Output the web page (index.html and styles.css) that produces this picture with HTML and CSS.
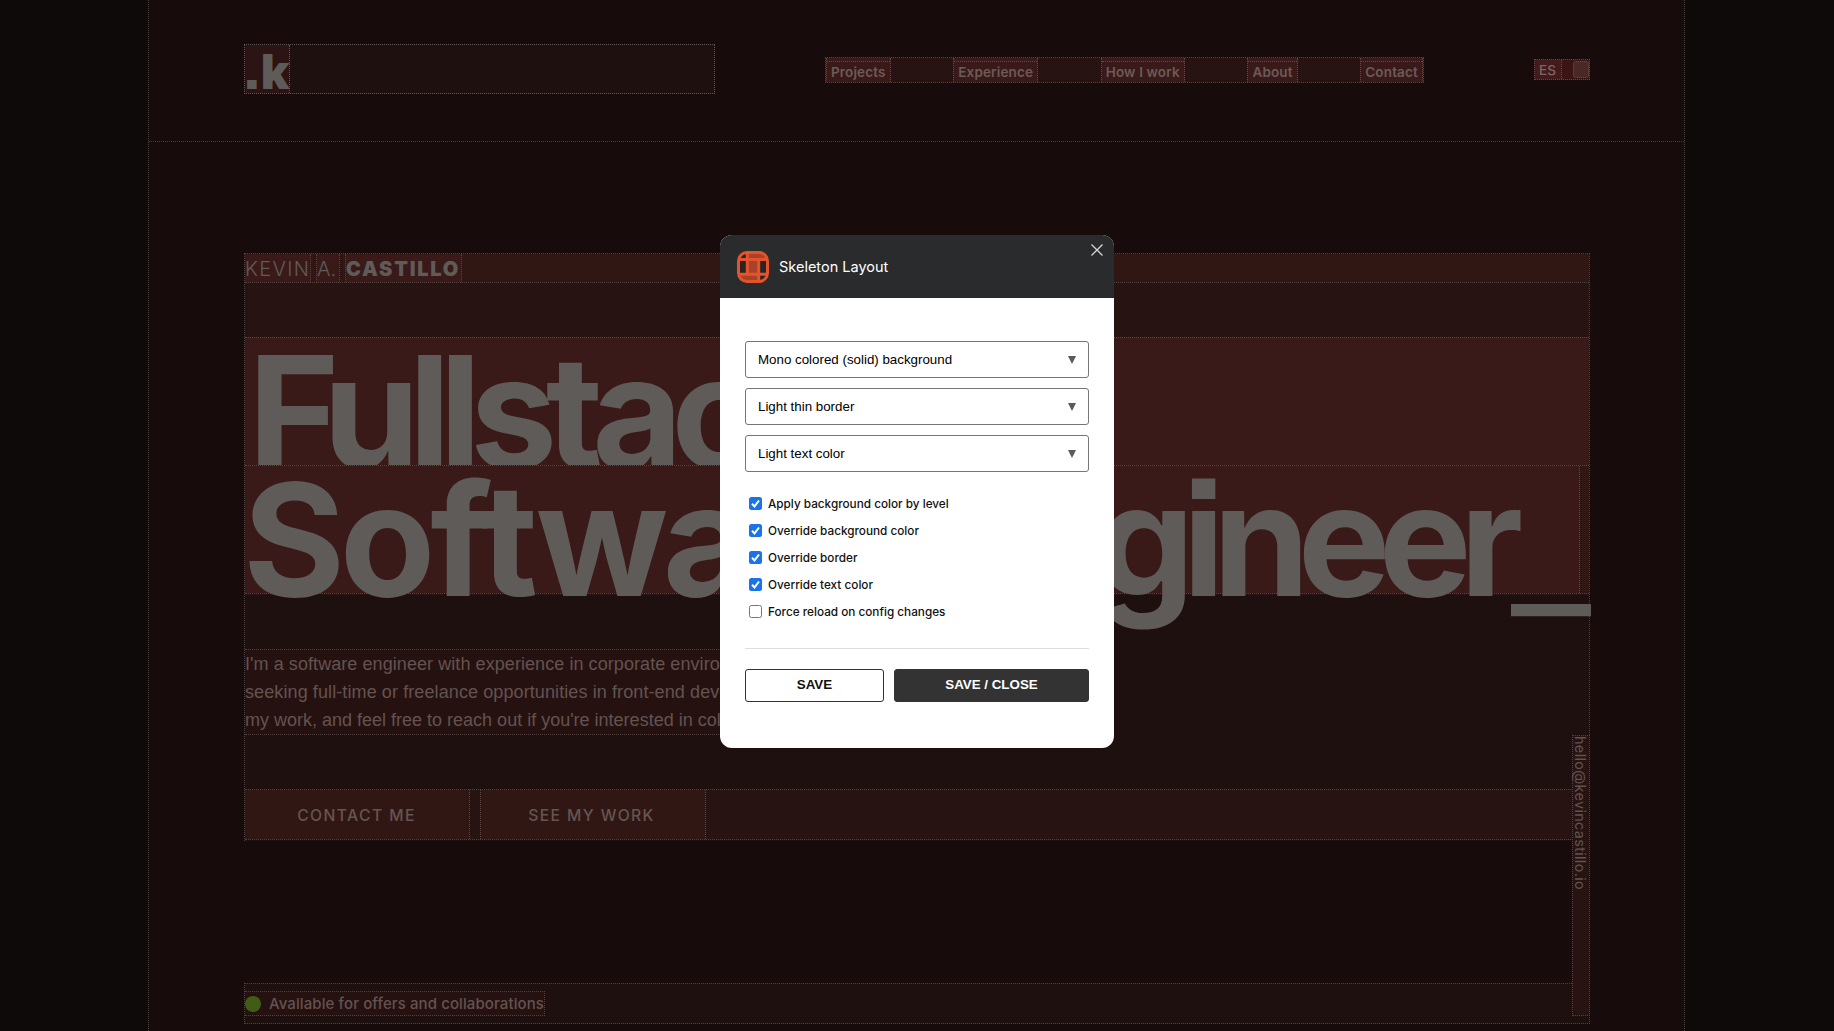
FILE: index.html
```html
<!DOCTYPE html>
<html lang="en">
<head>
<meta charset="utf-8">
<title>Kevin A. Castillo</title>
<link rel="stylesheet" href="styles.css">
</head>
<body>
<div class="page">
  <header class="header">
    <div class="brand"><span class="logo">.k</span></div>
    <nav class="nav">
      <div class="item"><a>Projects</a></div>
      <div class="item"><a>Experience</a></div>
      <div class="item"><a>How I work</a></div>
      <div class="item"><a>About</a></div>
      <div class="item"><a>Contact</a></div>
    </nav>
    <div class="tools"><span class="lang">ES</span><span class="theme"><i></i></span></div>
  </header>
  <main class="hero">
    <div class="intro">
      <div class="name"><span class="first">KEVIN</span><span class="mid">A.</span><span class="last">CASTILLO</span></div>
      <h1 class="title">
        <span class="line one">Fullstack</span>
        <span class="line two"><span class="inner"><span class="software">Software</span> <span class="engineer">Engineer</span><span class="cursor">_</span></span></span>
      </h1>
    </div>
    <p class="about"><span class="row">I'm a software engineer with experience in corporate environments,</span><span class="row wide">seeking full-time or freelance opportunities in front-end development. Explore</span><span class="row tight">my work, and feel free to reach out if you're interested in collaborating.</span></p>
    <div class="actions"><a class="cta">CONTACT ME</a><a class="cta">SEE MY WORK</a></div>
  </main>
  <footer class="footer"><div class="status"><i class="dot"></i>Available for offers and collaborations</div></footer>
  <a class="email">hello@kevincastillo.io</a>
</div>
<div class="modal">
  <div class="modal-head">
    <svg class="mark" viewBox="0 0 32 32"><rect x="1.5" y="1.5" width="29" height="29" rx="8" fill="#2b2423"/><path d="M11 2h14l4 5v2H11zM3 23h18v7H8l-5-4zM11 9h10v14H11z" fill="#a8432a"/><g fill="none" stroke="#e4532b" stroke-width="3"><rect x="1.500" y="1.500" width="29" height="29" rx="8.500"/><path d="M2 8.500h28M2 23.300h28M10.300 2v21M21.700 9v21"/></g></svg>
    <span class="modal-title">Skeleton Layout</span>
    <svg class="close" viewBox="0 0 12 12"><path d="M.5.5l11 11M11.500.5l-11 11" stroke="#d8d8d8" stroke-width="1.300"/></svg>
  </div>
  <div class="modal-body">
    <div class="select">Mono colored (solid) background<i></i></div>
    <div class="select">Light thin border<i></i></div>
    <div class="select">Light text color<i></i></div>
    <div class="checks">
      <div class="check"><span class="box on"><svg viewBox="0 0 13 13"><path d="M3 6.800l2.500 2.600L10 3.500"/></svg></span>Apply background color by level</div>
      <div class="check"><span class="box on"><svg viewBox="0 0 13 13"><path d="M3 6.800l2.500 2.600L10 3.500"/></svg></span>Override background color</div>
      <div class="check"><span class="box on"><svg viewBox="0 0 13 13"><path d="M3 6.800l2.500 2.600L10 3.500"/></svg></span>Override border</div>
      <div class="check"><span class="box on"><svg viewBox="0 0 13 13"><path d="M3 6.800l2.500 2.600L10 3.500"/></svg></span>Override text color</div>
      <div class="check"><span class="box"></span>Force reload on config changes</div>
    </div>
    <div class="buttons"><span class="btn">SAVE</span><span class="btn dark">SAVE / CLOSE</span></div>
  </div>
</div>
</body>
</html>
```
FILE: styles.css
```css
* { box-sizing: border-box; }
body { margin: 0; width: 1834px; height: 1031px; overflow: hidden; position: relative; background: #0e0a09; color: #5f5b58; font-family: "Liberation Sans", Arial, sans-serif; }
.page { position: relative; width: 1537px; height: 1031px; margin-left: 148px; background: #180b0b; border: dotted #47403d; border-width: 0 1px; }
.header { height: 142px; border-bottom: 1px dotted #47403d; padding: 44px 94px 0 95px; display: flex; }
.brand { width: 471px; height: 50px; background: #1f1010; border: 1px dotted #5e5754; }
.logo { display: block; width: 45px; height: 48px; text-indent: -2px; background: #2b1413; border-right: 1px dotted #5e5754; font: 900 47.500px/53px Inter, sans-serif; }
.nav { display: flex; justify-content: space-between; width: 599px; height: 26px; margin: 13px 0 0 110px; background: #261312; border: 1px dotted #51413e; }
.item { border: dotted #5e4846; border-width: 0 1px; background: #3a1a19; height: 24px; padding-top: 3px; }
.item a { display: block; border-top: 1px dotted #5e4846; height: 21px; padding: 0 4px; font: 600 13.500px/20px Inter, sans-serif; letter-spacing: .15px; color: #6c5b59; }
.tools { display: flex; width: 56px; height: 21px; margin: 15px 0 0 110px; border: 1px dotted #5e4846; background: #3a1513; }
.lang { width: 27px; border-right: 1px dotted #5e4846; background: #431b1c; padding-left: 4px; font: 500 13.500px/20px Inter, sans-serif; color: #7b6663; }
.theme { flex: 1; padding-left: 11px; display: flex; }
.theme i { flex: 1; margin: 1px 0; border: 1px dotted #66504e; border-radius: 3px; background: #4a2827; }
.hero { width: 1346px; height: 588px; margin: 111px 0 0 95px; background: #1f1010; border: dotted #4b413e; border-width: 1px 1px 0; }
.intro { background: #261312; height: 341px; }
.name { display: flex; height: 29px; background: #311714; border-bottom: 1px dotted #51413e; font: 300 20px/30px Inter, sans-serif; }
.name span { border-right: 1px dotted #51413e; background: #3a1a19; height: 28px; white-space: nowrap; }
.first { width: 66px; letter-spacing: 1.300px; }
.mid { width: 24px; margin-left: 5px; border-left: 1px dotted #51413e; letter-spacing: 0; }
.last { width: 117px; margin-left: 5px; border-left: 1px dotted #51413e; font-weight: 900; letter-spacing: 1.750px; }
.title { margin: 54px 0 0; font: bold 156px/147px Inter, sans-serif; white-space: nowrap; }
.line { display: block; height: 128px; border-top: 1px dotted #5a4643; background: #3a1a19; }
.one { letter-spacing: -11.500px; overflow: hidden; padding-left: 3px; }
.two { height: 129px; background: #311714; border-bottom: 1px dotted #51413e; }
.inner { display: flex; width: 1335px; height: 127px; background: #3a1a19; border-right: 1px dotted #5a4643; }
.software { width: 647px; margin: 0 38px 0 -2px; letter-spacing: -5.300px; }
.engineer { letter-spacing: -12px; }
.cursor { transform: translateY(8px) scale(1.077, .7); transform-origin: 0 130px; }
.about { margin: 54px 0 0; height: 86px; width: 720px; background: #261111; border: 1px dotted #4d3d3b; border-left: 0; font-size: 18px; line-height: 28px; color: #63534f; white-space: nowrap; }
.row { display: block; letter-spacing: .07px; }
.wide { letter-spacing: .1px; }
.tight { letter-spacing: 0; }
.actions { display: flex; gap: 10px; height: 51px; margin-top: 54px; background: #261312; border: dotted #51413e; border-width: 1px 0; }
.cta { width: 225px; padding-right: 1px; background: #311714; border-right: 1px dotted #5a4643; text-align: center; font: 500 15.700px/52px Inter, sans-serif; letter-spacing: 1.400px; color: #655551; }
.cta + .cta { border-left: 1px dotted #5a4643; width: 226px; padding-right: 3px; }
.footer { width: 1346px; height: 41px; margin: 142px 0 0 95px; background: #1f1010; border: 1px dotted #51413e; padding-top: 7px; }
.status { display: flex; align-items: center; gap: 8px; width: 300px; height: 25px; background: #261111; border: 1px dotted #51413e; border-left: 0; font: 500 15px/24px Inter, sans-serif; letter-spacing: .1px; color: #63534f; white-space: nowrap; }
.dot { width: 16px; height: 16px; border-radius: 50%; background: #415c14; flex: none; }
.email { position: absolute; left: 1423px; top: 735px; width: 18px; height: 281px; border: 1px dotted #51413e; background: #261312; writing-mode: vertical-rl; font: 14.500px/18px Inter, sans-serif; letter-spacing: .3px; color: #63534f; }
.modal { position: absolute; left: 720px; top: 235px; width: 394px; height: 513px; background: #fff; border-radius: 12px; overflow: hidden; }
.modal-head { height: 63px; background: #292b2c; display: flex; align-items: center; padding-left: 17px; position: relative; color: #fff; }
.mark { width: 32px; height: 32px; }
.modal-title { font: 400 14.500px/20px Inter, sans-serif; margin-left: 10px; }
.close { position: absolute; right: 11px; top: 9px; width: 12px; height: 12px; }
.modal-body { padding: 43px 25px 0; color: #111; }
.select { height: 37px; margin-bottom: 10px; border: 1px solid #767676; border-radius: 3px; display: flex; align-items: center; justify-content: space-between; padding: 0 12px; font-size: 13.330px; color: #000; }
.select i { border: solid transparent; border-width: 8px 4px 0; border-top-color: #5a5a5a; }
.checks { padding: 8px 0 0 4px; }
.check { height: 27px; display: flex; align-items: center; font: 500 11.750px/16px Inter, sans-serif; color: #111; }
.box { width: 13px; height: 13px; border: 1px solid #767676; border-radius: 2.500px; margin-right: 6px; display: flex; }
.on { border: 0; background: #1a73e8; }
.box svg { width: 13px; height: 13px; fill: none; stroke: #fff; stroke-width: 2; }
.buttons { display: flex; gap: 10px; margin-top: 23px; padding-top: 20px; border-top: 1px solid #ddd; }
.btn { width: 139px; height: 33px; border: 1px solid #333; border-radius: 3px; text-align: center; font-weight: bold; font-size: 13.330px; line-height: 30px; }
.dark { width: 195px; background: #333; color: #fff; }
/* square punctuation; kept last because the font shorthand resets it */
.logo, .item a, .name, .title, .check, .email, .status { font-feature-settings: "ss07"; }
```
